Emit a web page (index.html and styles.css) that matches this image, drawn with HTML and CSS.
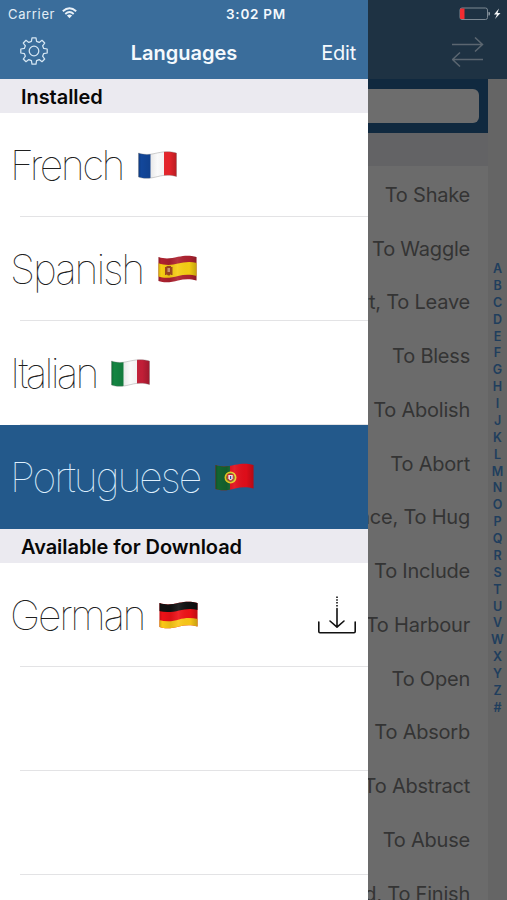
FILE: index.html
```html
<!DOCTYPE html>
<html lang="en">
<head>
<meta charset="utf-8">
<title>Languages</title>
<link rel="stylesheet" href="styles.css">
</head>
<body>
<div class="app">
  <aside class="drawer">
    <header class="drawer-top">
      <div class="status">
        <span class="carrier">Carrier</span>
        <svg class="wifi" width="15" height="12" viewBox="0 0 15 12"><g fill="none" stroke="#e9f1f8" stroke-width="1.9"><path d="M.8 4.3Q7.5-1.8 14.2 4.3"/><path d="M3.3 7Q7.5 3.2 11.7 7"/></g><path d="M4.9 8.5Q7.5 6.4 10.1 8.5L7.5 11.2z" fill="#e9f1f8"/></svg>
        <span class="clock">3:02 PM</span>
      </div>
      <nav class="bar">
        <svg class="gear" width="28" height="28" viewBox="-14 -14 28 28" fill="none" stroke="#d5e6f3" stroke-width="1.25" stroke-linejoin="round"><circle r="4.8"/><path d="M-2-13.2H2L2.6-9.7 5.2-8.6 8-10.7 10.7-8 8.6-5.2 9.7-2.6 13.2-2V2L9.7 2.6 8.6 5.2 10.7 8 8 10.7 5.2 8.6 2.6 9.7 2 13.2H-2L-2.6 9.7-5.2 8.6-8 10.7-10.7 8-8.6 5.2-9.7 2.6-13.2 2V-2L-9.7-2.6-8.6-5.2-10.7-8-8-10.7-5.2-8.6-2.6-9.7Z"/></svg>
        <h1 class="title">Languages</h1>
        <span class="edit">Edit</span>
      </nav>
    </header>
    <h2 class="section">Installed</h2>
    <div class="row"><span class="name french">French</span>
      <svg class="flag" viewBox="0 0 39 28"><g clip-path="url(#wave)"><path fill="#fafafa" d="M0 0h39v28H0z"/><path fill="#12479b" d="M0 0h12.5v28H0z"/><path fill="#e9252b" d="M26 0h13v28H26z"/><path fill="url(#shade)" d="M0 0h39v28H0z"/></g><use href="#edge"/></svg></div>
    <div class="row"><span class="name spanish">Spanish</span>
      <svg class="flag" viewBox="0 0 39 28"><g clip-path="url(#wave)"><path fill="#ae2230" d="M0 0h39v28H0z"/><path fill="#f7ce13" d="M0 8C8 11 14 10 20 8.500S32 6 39 8V21C32 19 26 19.500 20 21S8 24 0 21.500Z"/><path fill="#a24a20" d="M7 12h1.500v8H7zM13 12h1.500v8H13zM8.500 11h4.500v8q-2.200 3-4.500 0z"/><path fill="#d7a17b" d="M9.500 13h2.500v4H9.500z"/><path fill="url(#shade)" d="M0 0h39v28H0z"/></g></svg></div>
    <div class="row"><span class="name italian">Italian</span>
      <svg class="flag" viewBox="0 0 39 28"><g clip-path="url(#wave)"><path fill="#fafafa" d="M0 0h39v28H0z"/><path fill="#148542" d="M0 0h12.500v28H0z"/><path fill="#c51f38" d="M26 0h13v28H26z"/><path fill="url(#shade)" d="M0 0h39v28H0z"/></g><use href="#edge"/></svg></div>
    <div class="row selected"><span class="name portuguese">Portuguese</span>
      <svg class="flag" viewBox="0 0 39 28"><g clip-path="url(#wave)"><path fill="#e20d1a" d="M0 0h39v28H0z"/><path fill="#146430" d="M0 0h15v28H0z"/><circle cx="15.500" cy="14.500" r="5.200" fill="#79772a" stroke="#edcf24" stroke-width="1.600"/><path d="M12.800 11.500h5.400v4q-2.700 4.500-5.400 0z" fill="#f4eeee" stroke="#dc1d29"/><path d="M15 13h1.200v3H15z" fill="#304ba1"/><path fill="url(#shade)" d="M0 0h39v28H0z"/></g></svg></div>
    <h2 class="section">Available for Download</h2>
    <div class="row"><span class="name german">German</span>
      <svg class="flag" viewBox="0 0 39 28"><g clip-path="url(#wave)"><path fill="#ef1117" d="M0 0h39v28H0z"/><path fill="#111" d="M0 0H39V9C32 7 26 8 20 9.500S7 12 0 10Z"/><path fill="#fbc817" d="M0 19C7 21 14 20.500 20 18.500S32 16.500 39 18V28H0Z"/><path fill="url(#shade)" d="M0 0h39v28H0z"/></g></svg>
      <svg class="download" width="40" height="38" viewBox="0 0 40 38" fill="none" stroke="#111" stroke-width="1.600" stroke-linecap="round" stroke-linejoin="round"><path d="M1.800 26v9.500q0 1.200 1.200 1.200h34q1.200 0 1.200-1.200V26M20 12.500v18M13 25l7 6.200 7-6.200"/><path d="M20 .5v10" stroke-linecap="butt" stroke-dasharray="1.500 1.300"/></svg></div>
    <div class="row"></div>
    <div class="row"></div>
    <div class="row"></div>
    <svg width="0" height="0"><defs><path id="edge" fill="none" stroke="#777" stroke-opacity=".5" stroke-width=".7" d="M.5 2C8 4.500 13 3.300 20 1.800S32 .2 38.500 2V25.500C32 23.500 26 24 20 25.500S7 28.500.5 26Z"/><clipPath id="wave"><path d="M.5 2C8 4.500 13 3.300 20 1.800S32 .2 38.500 2V25.500C32 23.500 26 24 20 25.500S7 28.500.5 26Z"/></clipPath><linearGradient id="shade"><stop stop-color="#000" stop-opacity=".22"/><stop offset=".08" stop-opacity="0"/><stop offset=".3" stop-opacity=".08"/><stop offset=".5" stop-color="#fff" stop-opacity=".08"/><stop offset=".8" stop-opacity=".02"/><stop offset="1" stop-opacity=".22"/></linearGradient></defs></svg>
  </aside>
  <main class="dictionary">
    <header class="main-top">
      <svg class="battery" width="44" height="14" viewBox="0 0 44 14"><rect x="1" y="1" width="27.500" height="11.500" rx="2" fill="none" stroke="#7d8993"/><path fill="#f32c31" d="M2 1.500h3.500v10.500H2q-1 0-1-1V2.500q0-1 1-1z"/><path fill="#9aa4ac" d="M29.500 5h1q1 1.700 0 3.500h-1z"/><path fill="#f4f6f7" d="M40 1.500l-5 6h3L36 12l5.500-6h-3z"/></svg>
      <svg class="swap" width="32" height="30" viewBox="0 0 32 30" fill="none" stroke="#5b6670" stroke-width="1.500"><path d="M0 7.500h30M23 .5l7.500 7-7.500 7M31 22.500H1M8 15.500l-7.500 7 7.500 7"/></svg>
    </header>
    <div class="content">
      <div class="list">
        <div class="search"><div class="field"></div></div>
        <div class="group"></div>
        <div class="entry">To Shake</div>
        <div class="entry">To Waggle</div>
        <div class="entry">To Depart, To Leave</div>
        <div class="entry">To Bless</div>
        <div class="entry">To Abolish</div>
        <div class="entry">To Abort</div>
        <div class="entry">To Embrace, To Hug</div>
        <div class="entry">To Include</div>
        <div class="entry">To Harbour</div>
        <div class="entry">To Open</div>
        <div class="entry">To Absorb</div>
        <div class="entry">To Abstract</div>
        <div class="entry">To Abuse</div>
        <div class="entry">To End, To Finish</div>
      </div>
      <div class="index"><span>A</span><span>B</span><span>C</span><span>D</span><span>E</span><span>F</span><span>G</span><span>H</span><span>I</span><span>J</span><span>K</span><span>L</span><span>M</span><span>N</span><span>O</span><span>P</span><span>Q</span><span>R</span><span>S</span><span>T</span><span>U</span><span>V</span><span>W</span><span>X</span><span>Y</span><span>Z</span><span>#</span></div>
    </div>
  </main>
</div>
</body>
</html>
```
FILE: styles.css
```css
* { box-sizing: border-box; }
body { margin: 0; font-family: Inter, "Liberation Sans", sans-serif; }
.app { display: grid; grid-template-columns: 368px 139px; height: 900px; overflow: hidden; }

.drawer { height: 900px; overflow: hidden; background: #fff; }
.drawer-top { height: 79px; background: #3a6d9b; color: #f4f9fd; }
.status { display: flex; align-items: center; height: 27px; padding-left: 8px; font-size: 13px; }
.carrier { width: 47px; color: #e2edf6; letter-spacing: .65px; }
.wifi { margin: 0 0 2px 7px; }
.clock { margin-left: 149px; font-size: 13.5px; font-weight: 600; letter-spacing: .75px; white-space: nowrap; }
.bar { display: grid; grid-template-columns: 110px 148px 1fr; align-items: center; height: 51px; padding: 0 12px 0 0; }
.gear { margin: -3px 0 0 20px; }
.title { margin: 0; text-align: center; font-size: 20px; font-weight: 600; letter-spacing: 0; }
.edit { text-align: right; font-size: 20px; letter-spacing: -.2px; }
.section { height: 34px; margin: 0; padding-left: 21px; background: #ebeaf0; color: #080808; font-size: 20px; font-weight: 600; line-height: 36px; letter-spacing: -.05px; }
.row { display: flex; align-items: center; height: 104px; padding: 0 11px 0 10px; background: linear-gradient(#e3e3e5, #e3e3e5) 20px 103px / 348px 1px no-repeat #fff; color: #202020; }
.name { font-size: 41px; font-weight: 100; line-height: 50px; white-space: nowrap; }
.french { width: 128px; letter-spacing: -2.5px; }
.spanish { width: 148px; letter-spacing: -2.1px; }
.italian { width: 101px; letter-spacing: -2.8px; }
.portuguese { width: 205px; letter-spacing: -2.1px; }
.german { width: 149px; letter-spacing: -2.3px; }
.selected { background: #23598b; color: #deeffd; }
.flag { flex: none; width: 39px; height: 28px; }
.download { margin-left: auto; }

.dictionary { height: 900px; overflow: hidden; background: #656565; }
.main-top { display: flex; flex-direction: column; height: 79px; background: #1e3243; }
.battery { margin: 7px 0 0 91px; }
.swap { margin: 16px 0 0 84px; }
.content { display: grid; grid-template-columns: 120px 19px; }
.list { background: #6b6b6b; }
.search { height: 54px; padding: 10px 9px 10px 0; background: #10293f; }
.field { height: 34px; border-radius: 0 6px 6px 0; background: #6d6d6d; }
.group { height: 33px; background: #636365; }
.entry { display: flex; justify-content: flex-end; align-items: center; height: 53.75px; padding: 4px 18px 0 0; color: #343434; font-size: 20px; letter-spacing: -.22px; white-space: nowrap; }
.index { display: flex; flex-direction: column; padding-top: 181px; color: #203e5d; font-size: 12.5px; font-weight: 600; text-align: center; }
.index span { height: 16.88px; line-height: 17px; }
```
